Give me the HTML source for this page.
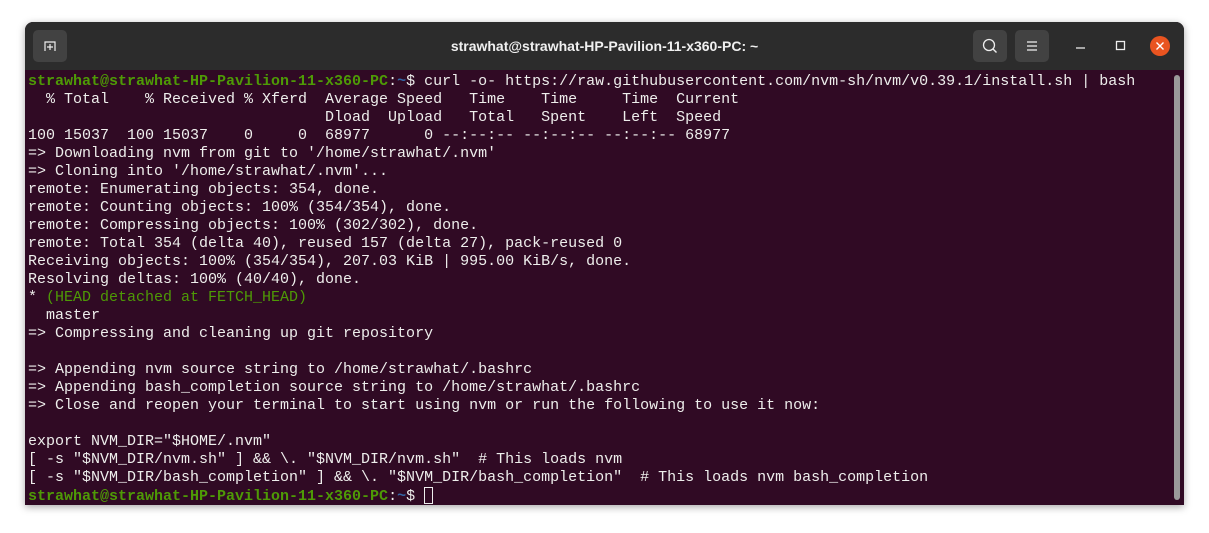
<!DOCTYPE html>
<html><head><meta charset="utf-8"><style>
html,body{margin:0;padding:0;background:#fff;width:1209px;height:533px;overflow:hidden}
.win{position:absolute;left:25px;top:22px;width:1159px;height:483px;background:#300a24;border-radius:8px 8px 0 0;box-shadow:0 2px 8px rgba(0,0,0,.35);overflow:hidden}
.tb{position:absolute;left:0;top:0;width:100%;height:48px;background:#2c2c2c;}
.title{position:absolute;left:0;right:0;top:0;text-align:center;color:#f0f0f0;font:bold 14px "Liberation Sans",sans-serif;line-height:48px}
.btn{position:absolute;top:8px;width:34px;height:32px;background:#424242;border-radius:5px}
.term{position:absolute;left:3px;top:51px;font:15px "Liberation Mono",monospace;line-height:18px;color:#eeeeec;white-space:pre;margin:0}
.g{color:#4e9a06;font-weight:bold}.b{color:#3465a4;font-weight:bold}.gn{color:#4e9a06}
.sb{position:absolute;left:1149px;top:53px;width:6px;height:425px;background:#9a9a9a;border-radius:3px}
.cur{display:inline-block;width:9px;height:17px;border:1px solid #eee;vertical-align:-4px;box-sizing:border-box}
</style></head><body>
<div class="win">
<div class="tb">
<div class="title">strawhat@strawhat-HP-Pavilion-11-x360-PC: ~</div>
<div class="btn" style="left:8px"><svg width="34" height="32"><path d="M12 21V12h10v9" fill="none" stroke="#eee" stroke-width="1.2"/><path d="M17 14v6M14 17h6" stroke="#eee" stroke-width="1.2"/></svg></div>
<div class="btn" style="left:948px"><svg width="34" height="32"><circle cx="16" cy="15" r="5.5" fill="none" stroke="#eee" stroke-width="1.3"/><path d="M20 19l3.5 3.5" stroke="#eee" stroke-width="1.4"/></svg></div>
<div class="btn" style="left:990px"><svg width="34" height="32"><path d="M12 12h10M12 16h10M12 20h10" stroke="#eee" stroke-width="1.2"/></svg></div>
<svg style="position:absolute;left:1045px;top:14px" width="110" height="22"><path d="M6 12h9" stroke="#eee" stroke-width="1.3"/><rect x="46.5" y="5.5" width="8" height="8" fill="none" stroke="#eee" stroke-width="1.3"/><circle cx="90" cy="10" r="10" fill="#e95420"/><path d="M86.5 6.5l7 7M93.5 6.5l-7 7" stroke="#fff" stroke-width="1.4"/></svg>
</div>
<div class="sb"></div>
<pre class="term"><span class="g">strawhat@strawhat-HP-Pavilion-11-x360-PC</span>:<span class="b">~</span>$ curl -o- https://raw.githubusercontent.com/nvm-sh/nvm/v0.39.1/install.sh | bash
  % Total    % Received % Xferd  Average Speed   Time    Time     Time  Current
                                 Dload  Upload   Total   Spent    Left  Speed
100 15037  100 15037    0     0  68977      0 --:--:-- --:--:-- --:--:-- 68977
=> Downloading nvm from git to '/home/strawhat/.nvm'
=> Cloning into '/home/strawhat/.nvm'...
remote: Enumerating objects: 354, done.
remote: Counting objects: 100% (354/354), done.
remote: Compressing objects: 100% (302/302), done.
remote: Total 354 (delta 40), reused 157 (delta 27), pack-reused 0
Receiving objects: 100% (354/354), 207.03 KiB | 995.00 KiB/s, done.
Resolving deltas: 100% (40/40), done.
* <span class="gn">(HEAD detached at FETCH_HEAD)</span>
  master
=> Compressing and cleaning up git repository

=> Appending nvm source string to /home/strawhat/.bashrc
=> Appending bash_completion source string to /home/strawhat/.bashrc
=> Close and reopen your terminal to start using nvm or run the following to use it now:

export NVM_DIR="$HOME/.nvm"
[ -s "$NVM_DIR/nvm.sh" ] &amp;&amp; \. "$NVM_DIR/nvm.sh"  # This loads nvm
[ -s "$NVM_DIR/bash_completion" ] &amp;&amp; \. "$NVM_DIR/bash_completion"  # This loads nvm bash_completion
<span class="g">strawhat@strawhat-HP-Pavilion-11-x360-PC</span>:<span class="b">~</span>$ <span class="cur"></span></pre>
</div>
</body></html>
